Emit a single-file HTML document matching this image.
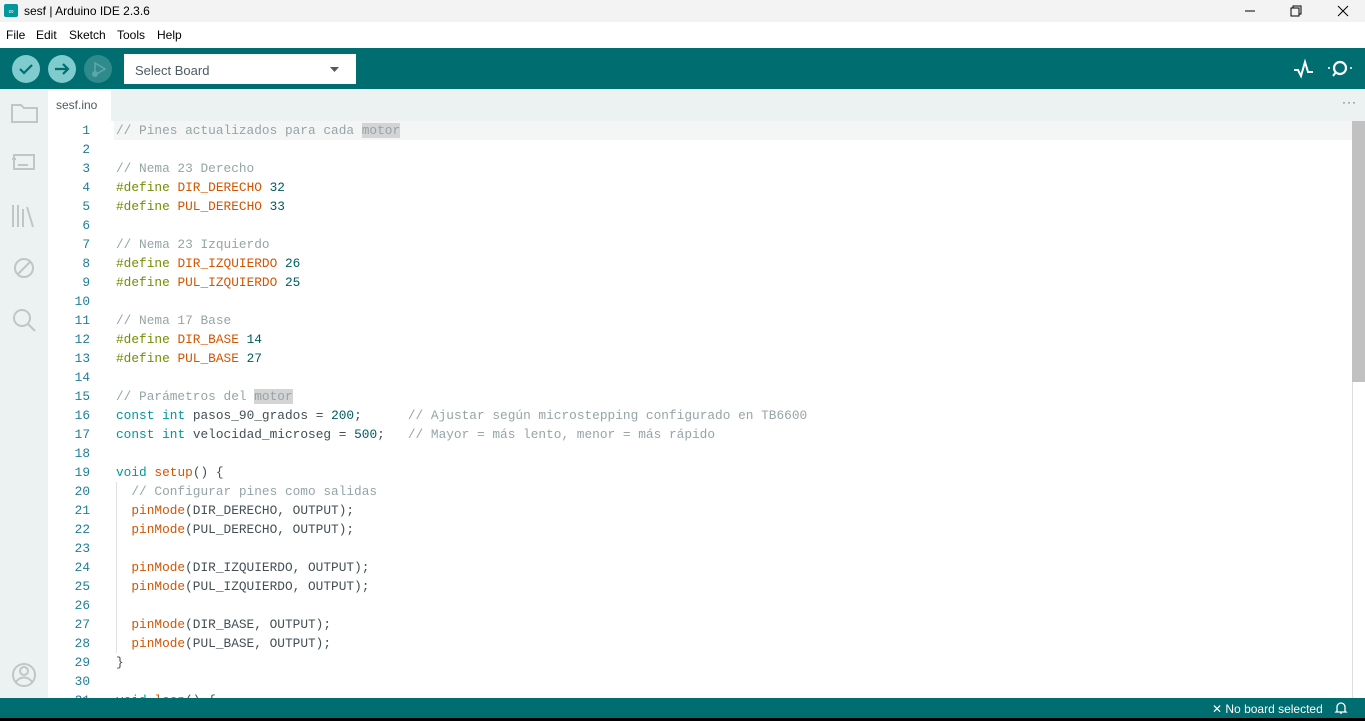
<!DOCTYPE html>
<html><head><meta charset="utf-8"><style>
*{margin:0;padding:0;box-sizing:border-box}
body{width:1365px;height:721px;overflow:hidden;background:#fff;font-family:"Liberation Sans",sans-serif;position:relative}
.title{position:absolute;top:0;left:0;width:1365px;height:22px;background:#f3f3f3;font-size:12px;color:#000}
.menu{position:absolute;top:22px;left:0;width:1365px;height:26px;background:#fff;font-size:12px}
.menu span{position:absolute;top:6px}
.tb{position:absolute;top:48px;left:0;width:1365px;height:41px;background:#006d70}
.circ{position:absolute;top:7px;width:28px;height:28px;border-radius:50%;background:#7fcbcd}
.board{position:absolute;left:124px;top:6px;width:232px;height:30px;background:#fff;font-size:13px;color:#4e5b61;padding:9px 0 0 11px}
.tabs{position:absolute;top:89px;left:48px;width:1317px;height:32px;background:#ecf1f1}
.tab{position:absolute;left:0;top:0;width:63px;height:32px;background:#fff;font-size:12px;color:#4e5b61;padding:9px 0 0 8px}
.side{position:absolute;top:89px;left:0;width:48px;height:609px;background:#ecf1f1}
.ed{position:absolute;top:121px;left:48px;width:1304px;height:577px;overflow:hidden;background:#fff}
.cur{position:absolute;top:0;left:66px;width:1238px;height:19px;background:#f4f5f5}
.ln{position:absolute;left:0;top:0;width:42px;text-align:right;font-family:"Liberation Mono",monospace;font-size:12.8px;line-height:19px;color:#1f7e96}
.code{position:absolute;left:68px;top:0;font-family:"Liberation Mono",monospace;font-size:12.8px;line-height:19px;color:#434f54;white-space:pre}
.guide{position:absolute;left:68px;top:361px;width:1px;height:171px;background:#e0e0e0}
.c{color:#95a5a6}.k{color:#00979d}.m{color:#728e00}.i{color:#d35400}.n{color:#005c5f}.f{color:#d35400}
.hl{background:#d4d4d4}
.sb{position:absolute;left:1352px;top:121px;width:13px;height:577px;background:#fff;border-left:1px solid #ddd}
.thumb{position:absolute;left:1352px;top:121px;width:13px;height:261px;background:#c1c1c1}
.status{position:absolute;top:698px;left:0;width:1365px;height:20px;background:#006d70;color:#fff;font-size:12px}
.blk{position:absolute;top:718px;left:0;width:1365px;height:3px;background:#000}
</style></head><body>
<div class="title">
<svg style="position:absolute;left:4px;top:4px" width="14" height="13"><rect width="14" height="13" rx="2" fill="#00979d"/><text x="7" y="9.5" font-size="7" fill="#fff" text-anchor="middle" font-family="Liberation Sans">∞</text></svg>
<span style="position:absolute;left:24px;top:4px">sesf | Arduino IDE 2.3.6</span>
<svg style="position:absolute;left:1235px;top:5px" width="120" height="12"><line x1="10" y1="6" x2="20" y2="6" stroke="#000"/><rect x="56" y="3" width="8" height="8" fill="none" stroke="#000"/><path d="M58 3V1h8v8h-2" fill="none" stroke="#000"/><path d="M103 1l10 10M113 1l-10 10" stroke="#000"/></svg>
</div>
<div class="menu"><span style="left:6px">File</span><span style="left:36px">Edit</span><span style="left:69px">Sketch</span><span style="left:117px">Tools</span><span style="left:157px">Help</span></div>
<div class="tb">
<div class="circ" style="left:12px"><svg width="28" height="28"><path d="M8 14l4 4 8-8" fill="none" stroke="#006d70" stroke-width="2.2"/></svg></div>
<div class="circ" style="left:48px"><svg width="28" height="28"><path d="M7 14h13M15 9l5 5-5 5" fill="none" stroke="#006d70" stroke-width="2.2"/></svg></div>
<div class="circ" style="left:84px;background:#2f8a8c"><svg width="28" height="28"><path d="M11 8l10 6-10 6z" fill="none" stroke="#5aa8aa" stroke-width="1.6"/><circle cx="11" cy="19" r="3" fill="#5aa8aa"/></svg></div>
<div class="board">Select Board<svg style="position:absolute;left:206px;top:13px" width="10" height="6"><path d="M0 0h9L4.5 5z" fill="#4e5b61"/></svg></div>
<svg style="position:absolute;left:1292px;top:10px" width="24" height="22"><path d="M2 12h4l3 6 4-14 3 10h5" fill="none" stroke="#fff" stroke-width="2"/></svg>
<svg style="position:absolute;left:1326px;top:10px" width="30" height="22"><circle cx="14" cy="10" r="6" fill="none" stroke="#fff" stroke-width="2.2"/><path d="M10 14l-3 4" stroke="#fff" stroke-width="2"/><circle cx="3" cy="10" r="1" fill="#fff"/><circle cx="25" cy="10" r="1" fill="#fff"/></svg>
</div>
<div class="tabs"><div class="tab">sesf.ino</div><span style="position:absolute;left:1294px;top:6px;color:#4e5b61;font-size:12px;letter-spacing:1px">···</span></div>
<div class="side">
<svg width="48" height="609" fill="none" stroke="#c0c6c6" stroke-width="2">
<path d="M12 16h9l3 3h13v14H12z"/>
<path d="M14 66h20v14H14zM12 70h4M18 76h10"/>
<path d="M13 116v22M18 116v22M23 120v18M27 118l6 20"/>
<circle cx="24" cy="179" r="9"/><path d="M18 185l12-12"/>
<circle cx="22" cy="229" r="8"/><path d="M28 235l7 7"/>
<circle cx="24" cy="586" r="11"/><circle cx="24" cy="582" r="4"/><path d="M16 593c4-6 12-6 16 0"/>
</svg>
</div>
<div class="ed">
<div class="cur"></div>
<div class="guide"></div>
<div class="ln">1<br>2<br>3<br>4<br>5<br>6<br>7<br>8<br>9<br>10<br>11<br>12<br>13<br>14<br>15<br>16<br>17<br>18<br>19<br>20<br>21<br>22<br>23<br>24<br>25<br>26<br>27<br>28<br>29<br>30<br>31</div>
<div class="code"><span class="c">// Pines actualizados para cada <span class="hl">motor</span></span>

<span class="c">// Nema 23 Derecho</span>
<span class="m">#define</span> <span class="i">DIR_DERECHO</span> <span class="n">32</span>
<span class="m">#define</span> <span class="i">PUL_DERECHO</span> <span class="n">33</span>

<span class="c">// Nema 23 Izquierdo</span>
<span class="m">#define</span> <span class="i">DIR_IZQUIERDO</span> <span class="n">26</span>
<span class="m">#define</span> <span class="i">PUL_IZQUIERDO</span> <span class="n">25</span>

<span class="c">// Nema 17 Base</span>
<span class="m">#define</span> <span class="i">DIR_BASE</span> <span class="n">14</span>
<span class="m">#define</span> <span class="i">PUL_BASE</span> <span class="n">27</span>

<span class="c">// Parámetros del <span class="hl">motor</span></span>
<span class="k">const</span> <span class="k">int</span> pasos_90_grados = <span class="n">200</span>;      <span class="c">// Ajustar según microstepping configurado en TB6600</span>
<span class="k">const</span> <span class="k">int</span> velocidad_microseg = <span class="n">500</span>;   <span class="c">// Mayor = más lento, menor = más rápido</span>

<span class="k">void</span> <span class="f">setup</span>() {
  <span class="c">// Configurar pines como salidas</span>
  <span class="f">pinMode</span>(DIR_DERECHO, OUTPUT);
  <span class="f">pinMode</span>(PUL_DERECHO, OUTPUT);

  <span class="f">pinMode</span>(DIR_IZQUIERDO, OUTPUT);
  <span class="f">pinMode</span>(PUL_IZQUIERDO, OUTPUT);

  <span class="f">pinMode</span>(DIR_BASE, OUTPUT);
  <span class="f">pinMode</span>(PUL_BASE, OUTPUT);
}

<span class="k">void</span> <span class="f">loop</span>() {</div>
</div>
<div class="sb"></div><div class="thumb"></div>
<div class="status"><span style="position:absolute;left:1212px;top:4px">✕ No board selected</span>
<svg style="position:absolute;left:1334px;top:3px" width="14" height="14"><path d="M3 10V6a4 4 0 018 0v4l1 1H2z M6 12h2" fill="none" stroke="#fff" stroke-width="1.3"/></svg></div>
<div class="blk"></div>
</body></html>
